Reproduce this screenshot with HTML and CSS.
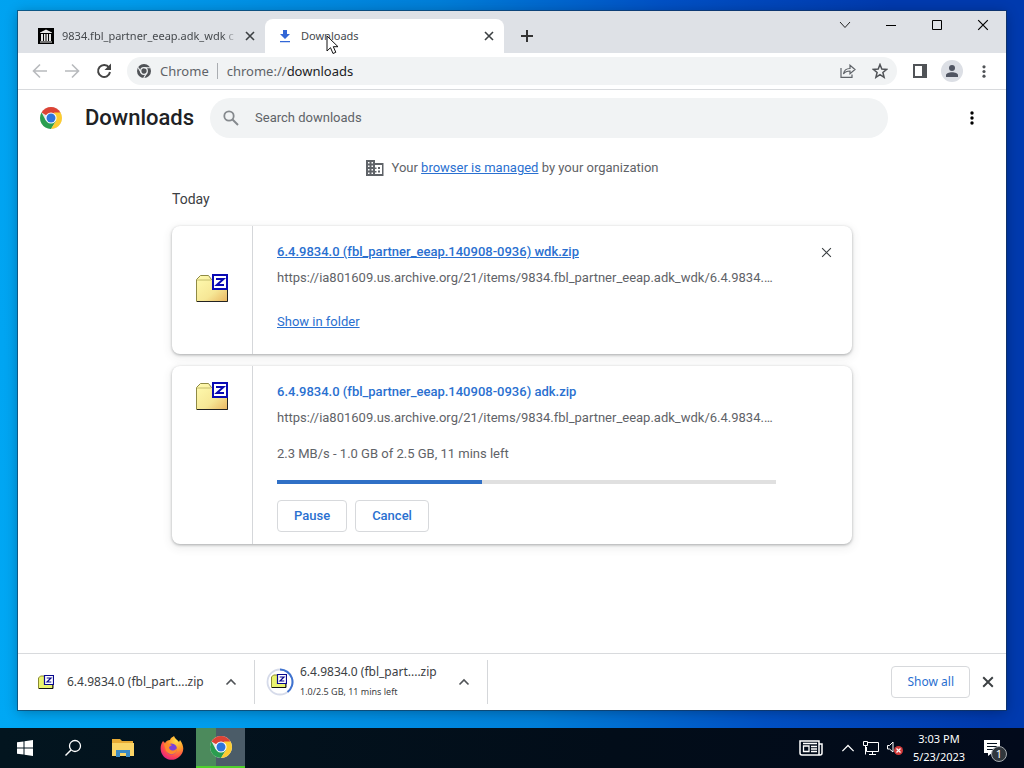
FILE: index.html
```html
<!DOCTYPE html>
<html lang="en">
<head>
<meta charset="utf-8">
<meta name="viewport" content="width=device-width, initial-scale=1">
<title>Downloads</title>
<link rel="stylesheet" href="styles.css">
</head>
<body>
<svg class="defs" aria-hidden="true">
  <defs>
    <linearGradient id="folderFill" x1="0" y1="0" x2="1" y2="1">
      <stop offset="0" stop-color="#fffbb0"/><stop offset=".6" stop-color="#f6e796"/><stop offset="1" stop-color="#e9b560"/>
    </linearGradient>
    <radialGradient id="foxFill" cx=".7" cy=".2" r=".9">
      <stop offset="0" stop-color="#ffe14a"/><stop offset=".4" stop-color="#ff9a2a"/><stop offset=".75" stop-color="#ff4650"/><stop offset="1" stop-color="#e0208a"/>
    </radialGradient>
  </defs>
  <symbol id="chrome" viewBox="0 0 24 24">
    <circle cx="12" cy="12" r="11" fill="#e5e5e5"/>
    <path d="M12 12 2.500 6.500A11 11 0 0 1 21.500 6.500Z" fill="#dc4335"/>
    <path d="M2.500 6.500A11 11 0 0 0 12 23L17 15 12 12 6.800 14.500Z" fill="#2a9d4f"/>
    <path d="M21.500 6.500A11 11 0 0 1 12 23L17 15 15 6.500Z" fill="#fdcc30"/>
    <circle cx="12" cy="12" r="5.600" fill="#fff"/><circle cx="12" cy="12" r="4.500" fill="#2f74dc"/>
  </symbol>
  <symbol id="zipfile" viewBox="0 0 32 28">
    <path d="M.5 27.500V5.500L4.500 1.500H12.500L15.500 5.500H31.500V27.500Z" fill="url(#folderFill)" stroke="#8f8a45"/>
    <path d="M1 6H15" stroke="#c4bd6c"/>
    <path d="M1 27.500H31.500V16" fill="none" stroke="#222"/>
    <path d="M17 1H31V15H17Z" fill="#fff" stroke="#0a0ab4" stroke-width="2"/>
    <path d="M20 5H27.500L20.800 11H28" fill="none" stroke="#0a0ab4" stroke-width="2"/>
  </symbol>
  <symbol id="zipsmall" viewBox="0 0 16 14">
    <path d="M.5 13.500V3L2.500 1H7V3H14.500V13.500Z" fill="#eaf36f" stroke="#8a8a32"/>
    <path d="M1 13.500H15V9" fill="none" stroke="#111"/>
    <path d="M6.500.500H15.500V9.500H6.500Z" fill="#fff" stroke="#08088e" stroke-width="1.200"/>
    <path d="M8.700 3H13L9 7H13.300" fill="none" stroke="#08088e" stroke-width="1.200"/>
  </symbol>
  <symbol id="cross" viewBox="0 0 10 10"><path d="M1 1 9 9M9 1 1 9" fill="none" stroke="currentColor"/></symbol>
  <symbol id="dots" viewBox="0 0 4 14"><circle cx="2" cy="2" r="1.700"/><circle cx="2" cy="7" r="1.700"/><circle cx="2" cy="12" r="1.700"/></symbol>
  <symbol id="up" viewBox="0 0 12 8"><path d="M1.500 6.500 6 2 10.500 6.500" fill="none" stroke="currentColor"/></symbol>
</svg>

<main class="desktop">
  <section class="window" aria-label="Downloads - Google Chrome">
    <header class="tabstrip">
      <div class="tab">
        <svg width="16" height="16" viewBox="0 0 16 16"><path d="M0 0H16V16H0Z"/><path d="M2 4.500 8 1.500 14 4.500V5H2ZM3 6H5V13H3ZM6 6H7.500V13H6ZM8.500 6H10V13H8.500ZM11 6H13V13H11ZM2 13.500H14V14.500H2Z" fill="#e8e8e8"/></svg>
        <span class="tab-title tab-title-fade">9834.fbl_partner_eeap.adk_wdk c</span>
        <button class="icon-btn" aria-label="Close tab"><svg class="bold" width="10" height="10"><use href="#cross"/></svg></button>
      </div>
      <div class="tab tab-active">
        <svg width="16" height="16" viewBox="0 0 16 16" fill="#3367d6"><path d="M6 2H10V6H13L8 11 3 6H6ZM3 13H13V14.300H3Z"/></svg>
        <span class="tab-title">Downloads</span>
        <button class="icon-btn" aria-label="Close tab"><svg class="bold" width="10" height="10"><use href="#cross"/></svg></button>
        <svg class="cursor" width="14" height="20" viewBox="0 0 14 20"><path d="M1 1V16L4.500 12.700 7 18.500 9.800 17.300 7.300 11.700H12Z" fill="#fff" stroke="#111"/></svg>
      </div>
      <button class="icon-btn new-tab" aria-label="New tab"><svg width="12" height="12" viewBox="0 0 12 12"><path d="M6 0V12M0 6H12" stroke="#333" stroke-width="2"/></svg></button>
      <div class="window-controls">
        <button class="icon-btn" aria-label="Search tabs"><svg width="12" height="8" viewBox="0 0 12 8"><path d="M1 1 6 6.500 11 1" fill="none" stroke="#222"/></svg></button>
        <button class="icon-btn" aria-label="Minimize"><svg width="10" height="10" viewBox="0 0 10 10"><path d="M0 5.500H10" stroke="#000"/></svg></button>
        <button class="icon-btn" aria-label="Maximize"><svg width="10" height="10" viewBox="0 0 10 10"><path d="M.5.500H9.500V9.500H.5Z" fill="none" stroke="#000"/></svg></button>
        <button class="icon-btn" aria-label="Close"><svg width="12" height="12"><use href="#cross"/></svg></button>
      </div>
    </header>

    <nav class="toolbar" aria-label="Browser">
      <div class="nav-buttons">
        <button class="icon-btn nav-off" aria-label="Back"><svg width="16" height="16" viewBox="0 0 16 16"><path d="M15 8H2M8 1.500 1.500 8 8 14.500" fill="none" stroke="currentColor" stroke-width="1.600"/></svg></button>
        <button class="icon-btn nav-off" aria-label="Forward"><svg width="16" height="16" viewBox="0 0 16 16"><path d="M1 8H14M8 1.500 14.500 8 8 14.500" fill="none" stroke="currentColor" stroke-width="1.600"/></svg></button>
        <button class="icon-btn" aria-label="Reload"><svg width="16" height="16" viewBox="0 0 16 16"><path d="M13 4.500A6 6 0 1 0 14 9" fill="none" stroke="#444" stroke-width="2"/><path d="M15 .500V7H8.500Z" fill="#444"/></svg></button>
      </div>
      <div class="omnibox">
        <svg width="14" height="14" viewBox="0 0 14 14"><circle cx="7" cy="7" r="7" fill="#505357"/><circle cx="7" cy="7" r="3.300" fill="#505357" stroke="#f1f3f4" stroke-width="1.300"/><path d="M7 3.700H13.300M4.100 8.700 1.200 3.500M9.900 8.700 6.700 14" stroke="#f1f3f4" stroke-width="1.100"/></svg>
        <span class="origin">Chrome</span>
        <span class="address"><span class="scheme">chrome://</span>downloads</span>
        <button class="icon-btn" aria-label="Share"><svg width="16" height="14" viewBox="0 0 16 14"><path d="M1 4V13.300H12V10.500M3.500 10C4 6 6.500 4.500 10 4.500V1.200L15 5.500 10 9.700V7C7 7 5 7.700 3.500 10Z" fill="none" stroke="#5f6368" stroke-width="1.200"/></svg></button>
        <button class="icon-btn" aria-label="Bookmark this tab"><svg width="16" height="16" viewBox="0 0 16 16"><path d="M8 1.500 9.800 6.100 14.600 6.400 10.900 9.500 12.100 14.300 8 11.700 3.900 14.300 5.100 9.500 1.400 6.400 6.200 6.100Z" fill="none" stroke="#505357" stroke-width="1.500"/></svg></button>
      </div>
      <div class="toolbar-end">
        <button class="icon-btn" aria-label="Side panel"><svg width="14" height="14" viewBox="0 0 14 14"><path d="M0 0H14V14H0Z" fill="#505357"/><path d="M2 2H9V12H2Z" fill="#fff"/></svg></button>
        <button class="icon-btn avatar" aria-label="Profile"><svg width="12" height="12" viewBox="0 0 12 12" fill="#505562"><circle cx="6" cy="3" r="3"/><path d="M0 12V10C0 8.300 3 7.200 6 7.200S12 8.300 12 10V12Z"/></svg></button>
        <button class="icon-btn" aria-label="Menu"><svg width="4" height="13" fill="#505357"><use href="#dots"/></svg></button>
      </div>
    </nav>

    <div class="page">
      <header class="page-header">
        <svg width="24" height="24"><use href="#chrome"/></svg>
        <h1>Downloads</h1>
        <label class="search">
          <svg width="16" height="16" viewBox="0 0 16 16"><circle cx="6" cy="6" r="4.700" fill="none" stroke="#85898d" stroke-width="1.800"/><path d="M9.500 9.500 15 15" stroke="#85898d" stroke-width="2"/></svg>
          <input type="search" placeholder="Search downloads" aria-label="Search downloads">
        </label>
        <button class="icon-btn more" aria-label="More actions"><svg width="4" height="14"><use href="#dots"/></svg></button>
      </header>

      <div class="content">
        <p class="managed">
          <svg width="18" height="16" viewBox="0 0 18 16"><path d="M0 0H9V3H17.500V16H0Z" fill="#5f6368"/><path d="M2 2H3.500V3.500H2ZM5.500 2H7V3.500H5.500ZM2 5.500H3.500V7H2ZM5.500 5.500H7V7H5.500ZM2 9H3.500V10.500H2ZM5.500 9H7V10.500H5.500ZM2 12.500H3.500V14H2ZM5.500 12.500H7V14H5.500ZM9 5H16V14H9V12.500H10.500V11H9V9H10.500V7.500H9Z" fill="#fff"/><path d="M12 7H14V9H12ZM12 10.500H14V12.500H12Z" fill="#5f6368"/></svg>
          <span>Your <a href="#managed">browser is managed</a> by your organization</span>
        </p>
        <h2>Today</h2>
        <div class="cards">
          <article class="card">
            <div class="file-icon file-icon-middle"><svg width="32" height="28"><use href="#zipfile"/></svg></div>
            <div class="details">
              <a class="file-name" href="#wdk">6.4.9834.0 (fbl_partner_eeap.140908-0936) wdk.zip</a>
              <div class="url">https://ia801609.us.archive.org/21/items/9834.fbl_partner_eeap.adk_wdk/6.4.9834.0%20wdk.zip</div>
              <a class="show-folder" href="#folder">Show in folder</a>
            </div>
            <div class="remove"><button class="icon-btn" aria-label="Remove from list"><svg width="11" height="11"><use href="#cross"/></svg></button></div>
          </article>
          <article class="card">
            <div class="file-icon"><svg width="32" height="28"><use href="#zipfile"/></svg></div>
            <div class="details details-active">
              <a class="file-name file-name-plain" href="#adk">6.4.9834.0 (fbl_partner_eeap.140908-0936) adk.zip</a>
              <div class="url">https://ia801609.us.archive.org/21/items/9834.fbl_partner_eeap.adk_wdk/6.4.9834.0%20adk.zip</div>
              <div class="status">2.3 MB/s - 1.0 GB of 2.5 GB, 11 mins left</div>
              <progress max="100" value="41" aria-label="Download progress"></progress>
              <div class="actions"><button class="btn">Pause</button><button class="btn">Cancel</button></div>
            </div>
            <div class="remove"></div>
          </article>
        </div>
      </div>
    </div>

    <footer class="shelf">
      <div class="shelf-item">
        <svg width="16" height="14"><use href="#zipsmall"/></svg>
        <div class="shelf-text">6.4.9834.0 (fbl_part....zip</div>
        <button class="icon-btn" aria-label="Options"><svg class="bold" width="12" height="8"><use href="#up"/></svg></button>
      </div>
      <div class="shelf-item shelf-item-busy">
        <svg width="28" height="28" viewBox="0 0 28 28"><circle cx="14" cy="14" r="12.500" fill="none" stroke="#d6dbea" stroke-width="1.800"/><path d="M14 1.500A12.500 12.500 0 0 1 21.500 24" fill="none" stroke="#3f73d0" stroke-width="2"/><use href="#zipsmall" x="5" y="6" width="16" height="14"/></svg>
        <div class="shelf-text">6.4.9834.0 (fbl_part....zip<small>1.0/2.5 GB, 11 mins left</small></div>
        <button class="icon-btn" aria-label="Options"><svg class="bold" width="12" height="8"><use href="#up"/></svg></button>
      </div>
      <button class="btn show-all">Show all</button>
      <button class="icon-btn" aria-label="Close downloads bar"><svg class="bold" width="12" height="12"><use href="#cross"/></svg></button>
    </footer>
  </section>
</main>

<footer class="taskbar">
  <button class="task" aria-label="Start"><svg width="16" height="16" viewBox="0 0 16 16" fill="#fff"><path d="M0 2.300 6.500 1.400V7.500H0ZM7.500 1.200 16 0V7.500H7.500ZM0 8.500H6.500V14.600L0 13.700ZM7.500 8.500H16V16L7.500 14.800Z"/></svg></button>
  <button class="task" aria-label="Search"><svg width="18" height="18" viewBox="0 0 18 18"><circle cx="10" cy="7" r="5.500" fill="none" stroke="#fff" stroke-width="1.300"/><path d="M6 11 .5 16.500" stroke="#fff" stroke-width="1.400"/></svg></button>
  <button class="task" aria-label="File Explorer"><svg width="22" height="18" viewBox="0 0 22 18"><path d="M0 0H8L10 2H21V17H0Z" fill="#e8ab35"/><path d="M0 4H22V17H0Z" fill="#fbd566"/><path d="M4 18V11H18V18H14V14H8V18Z" fill="#3b8ac4"/></svg></button>
  <button class="task" aria-label="Firefox"><svg width="24" height="24" viewBox="0 0 24 24"><path d="M3 5 5 7C6 5 8 4 10 4 11 1 13 1 14 0 15 3 18 4 19 6L20 4C25 11 24 17 19 21 13 26 5 24 2 18 0 14 0 9 3 5Z" fill="url(#foxFill)"/><circle cx="11.500" cy="13" r="5.500" fill="#7b42d8"/><path d="M4 8C8 6 10 8 12 9L9 11C9 15 14 16 17 12 18 19 9 20 6 15Z" fill="#ff8a2b"/></svg></button>
  <button class="task task-active" aria-label="Google Chrome"><svg width="24" height="24"><use href="#chrome"/></svg></button>
  <div class="tray">
    <button class="icon-btn news" aria-label="News"><svg width="24" height="16" viewBox="0 0 24 16"><path d="M1 1H20V15H3A2 2 0 0 1 1 13ZM20 4H23V13A2 2 0 0 1 21 15H3" fill="none" stroke="#fff" stroke-width="1.500"/><path d="M4.500 6H10V11.500H4.500ZM4 3.500H18M12 6.500H18M12 9H18M12 11.500H18" fill="none" stroke="#fff" stroke-width="1.300"/></svg></button>
    <button class="icon-btn" aria-label="Hidden icons"><svg width="16" height="10"><use href="#up"/></svg></button>
    <button class="icon-btn" aria-label="Network"><svg width="16" height="14" viewBox="0 0 16 14"><path d="M5 1.500H15.500V10.500H3.500V6M9.500 10.500V13M6 13.500H13M.5.500H4.500V4.500H.5ZM2.500 5V13.500" fill="none" stroke="#fff"/></svg></button>
    <button class="icon-btn" aria-label="Volume muted"><svg width="18" height="16" viewBox="0 0 18 16"><path d="M1.500 5.500H3.500L7 2V12L3.500 9H1.500Z" fill="none" stroke="#fff"/><circle cx="12.500" cy="10.500" r="4.500" fill="#d33b3b"/><path d="M10.500 8.500 14.500 12.500M14.500 8.500 10.500 12.500" stroke="#fff" stroke-width="1.200"/></svg></button>
    <time class="clock" datetime="2023-05-23T15:03">3:03 PM<br>5/23/2023</time>
    <button class="icon-btn notice" aria-label="1 notification"><svg width="16" height="16" viewBox="0 0 16 16"><path d="M0 0H16V13H8L4 16V13H0Z" fill="#fff"/><path d="M3 3.500H13M3 6.500H13M3 9.500H9" stroke="#03101d"/></svg><span class="badge">1</span></button>
  </div>
</footer>
</body>
</html>
```

FILE: styles.css
```css
* { box-sizing: border-box; }

body {
  margin: 0;
  min-height: 100vh;
  display: flex;
  flex-direction: column;
  font: 12px/16px "Noto Sans", "Open Sans", sans-serif;
  color: #3c4043;
}

svg { display: block; flex: none; }
.defs { position: absolute; width: 0; height: 0; }
h1, h2, p { margin: 0; font-weight: 400; }
button { font: inherit; color: inherit; cursor: default; }

.icon-btn {
  display: flex;
  align-items: center;
  justify-content: center;
  flex: none;
  padding: 0;
  border: 0;
  background: none;
}
.bold { stroke-width: 1.6; }

.desktop {
  flex: 1;
  display: flex;
  padding: 11px 18px 18px;
  background: linear-gradient(82deg, #00a8f4 0%, #009cec 20%, #007ed8 48%, #0050c4 68%, #003aae 88%);
}

.window {
  flex: 1;
  min-width: 0;
  display: flex;
  flex-direction: column;
  background: #fff;
  box-shadow: 0 0 0 1px rgb(20 50 80 / 60%), 0 2px 12px rgb(0 0 0 / 30%);
}

/* Tabs */
.tabstrip {
  display: flex;
  height: 42px;
  padding: 8px 0 0 8px;
  background: #dee1e6;
}
.tab {
  position: relative;
  display: flex;
  align-items: center;
  gap: 8px;
  width: 239px;
  padding: 0 10px 0 12px;
}
.tab-active { background: #fff; border-radius: 8px 8px 0 0; }
.tab-title {
  flex: 1;
  min-width: 0;
  overflow: hidden;
  white-space: nowrap;
  font-size: 11px;
  color: #45494d;
}
.tab-title-fade {
  -webkit-mask-image: linear-gradient(90deg, #000 92%, transparent);
  mask-image: linear-gradient(90deg, #000 92%, transparent);
}
.cursor { position: absolute; left: 61px; top: 16px; }
.new-tab { width: 28px; margin-left: 9px; }
.window-controls {
  display: flex;
  align-items: flex-start;
  margin-left: auto;
}
.window-controls .icon-btn { width: 46px; height: 12px; color: #000; }

/* Toolbar */
.toolbar {
  display: flex;
  align-items: center;
  height: 37px;
  padding: 0 12px 0 14px;
  border-bottom: 1px solid #d8dadd;
}
.nav-buttons { display: flex; gap: 16px; margin-right: 15px; }
.nav-off { color: #b8babd; }
.omnibox {
  flex: 1;
  display: flex;
  align-items: center;
  height: 28px;
  padding: 0 9px 0 10px;
  gap: 16px;
  border-radius: 14px;
  background: #f1f3f4;
  font-size: 13px;
}
.origin {
  margin-left: -7px;
  padding-right: 8px;
  border-right: 1px solid #aaadb1;
  color: #5f6368;
}
.address { flex: 1; margin-left: -7px; color: #202124; }
.scheme { color: #5f6368; }
.toolbar-end { display: flex; align-items: center; gap: 11px; margin-left: 13px; }
.toolbar-end .icon-btn { min-width: 20px; }
.avatar { width: 22px; height: 22px; border-radius: 50%; background: #dcdfe5; }

/* Page */
.page { flex: 1; font: 13px/20px Roboto, sans-serif; color: #5f6368; }
.page-header {
  display: flex;
  align-items: center;
  height: 56px;
  padding: 0 26px 0 21px;
}
h1 {
  margin: 0 16px 0 22px;
  font-size: 22px;
  font-weight: 500;
  line-height: 28px;
  color: #202124;
}
.search {
  flex: 0 1 678px;
  display: flex;
  align-items: center;
  gap: 16px;
  height: 40px;
  padding: 0 13px;
  border-radius: 20px;
  background: #f1f3f4;
}
.search input {
  flex: 1;
  min-width: 0;
  padding: 0;
  border: 0;
  outline: 0;
  background: none;
  font: inherit;
  color: inherit;
}
.search input::placeholder { color: #5f6368; opacity: 1; }
.more { width: 16px; margin-left: auto; }

.content { max-width: 680px; margin: 0 auto; padding: 12px 0; }
.managed {
  display: flex;
  align-items: center;
  justify-content: center;
  gap: 8px;
}
a { color: #2a70d0; }
h2 { margin: 11px 0 17px; font-size: 14px; line-height: 20px; color: #3c4043; }

.cards { display: flex; flex-direction: column; gap: 12px; }
.card {
  display: flex;
  border-radius: 8px;
  background: #fff;
  box-shadow: 0 1px 3px rgb(60 64 67 / 40%), 0 3px 8px 2px rgb(60 64 67 / 8%);
}
.file-icon {
  display: flex;
  justify-content: center;
  flex: 0 0 81px;
  padding-top: 16px;
  border-right: 1px solid #d5d7da;
}
.file-icon-middle { align-items: center; padding: 0 0 4px; }
.details {
  flex: 1;
  min-width: 0;
  display: flex;
  flex-direction: column;
  align-items: flex-start;
  padding: 16px 0 22px 24px;
}
.details-active { padding-bottom: 12px; }
.file-name { font-weight: 500; }
.file-name-plain { text-decoration: none; }
.url {
  width: 100%;
  margin-top: 6px;
  overflow: hidden;
  white-space: nowrap;
  text-overflow: ellipsis;
}
.show-folder { margin-top: 24px; }
.status { margin-top: 16px; }
progress {
  width: 100%;
  height: 4px;
  margin: 16px 0;
  border: 0;
  appearance: none;
  background: #e0e0e0;
}
progress::-webkit-progress-bar { background: #e0e0e0; }
progress::-webkit-progress-value { background: #3070c6; }
.actions { display: flex; gap: 8px; }
.btn {
  height: 32px;
  padding: 0 16px;
  border: 1px solid #d7d9dc;
  border-radius: 4px;
  background: #fff;
  color: #2a70d0;
  font-weight: 500;
}
.remove { flex: 0 0 76px; padding: 18px 18px; }
.remove .icon-btn { width: 16px; height: 16px; margin-left: auto; color: #3c4043; }

/* Downloads shelf */
.shelf {
  display: flex;
  align-items: center;
  height: 57px;
  padding-right: 12px;
  border-top: 1px solid #d8dadd;
}
.shelf-item {
  display: flex;
  align-items: center;
  gap: 13px;
  width: 237px;
  height: 44px;
  padding: 0 16px 0 20px;
  border-right: 1px solid #d5d7da;
}
.shelf-item-busy { width: 233px; gap: 6px; padding-left: 11px; }
.shelf-text { flex: 1; white-space: nowrap; }
.shelf small { display: block; margin-top: 4px; font-size: 9px; }
.shelf-item .icon-btn { width: 14px; color: #505357; }
.show-all { margin: 0 12px 0 auto; padding: 0 15px; font-weight: 400; }

/* Taskbar */
.taskbar {
  display: flex;
  align-items: center;
  height: 40px;
  background: linear-gradient(90deg, #03151f, #020d19 60%, #020a1b);
  color: #fff;
}
.task {
  display: flex;
  align-items: center;
  justify-content: center;
  width: 49px;
  height: 40px;
  padding: 0;
  border: 0;
  background: none;
}
.task-active {
  border-bottom: 2px solid #4fd02c;
  background: linear-gradient(90deg, #4c8a5c 40%, #4b5c68 40%);
}
.tray { display: flex; align-items: center; gap: 7px; margin-left: auto; padding-right: 24px; }
.tray .news { margin-right: 10px; }
.clock { width: 56px; text-align: center; font-size: 11px; line-height: 18px; }
.notice { position: relative; margin-left: 10px; }
.badge {
  position: absolute;
  left: 7px;
  top: 6px;
  width: 16px;
  height: 16px;
  border: 1px solid #a6abb0;
  border-radius: 50%;
  background: #30363c;
  font-size: 11px;
  line-height: 14px;
}
```
